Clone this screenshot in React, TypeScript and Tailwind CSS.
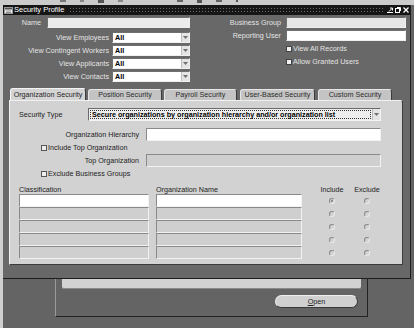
import React from "react";

const field =
  "h-[11px] border border-t-[#6f6f6f] border-l-[#6f6f6f] border-b-[#efefef] border-r-[#efefef]";
const cell =
  "h-[13px] border border-t-[#8a8a8a] border-l-[#8a8a8a] border-b-[#f2f2f2] border-r-[#f2f2f2]";

const DropArrow: React.FC = () => (
  <span className="flex h-full w-[8px] items-center justify-center border-l border-[#bdbdbd] bg-[#e4e4e4]">
    <svg width="5" height="3" viewBox="0 0 5 3">
      <path d="M0 0h5L2.5 3z" fill="#707070" />
    </svg>
  </span>
);

const ViewSelect: React.FC<{ label: string }> = ({ label }) => (
  <div className="flex h-[11px] items-center">
    <span className="w-[106px] text-right text-[#e4e4e4]">{label}</span>
    <div className={`${field} ml-[3px] flex w-[78px] items-center bg-white`}>
      <span className="flex-1 pl-[2px] font-bold text-black">All</span>
      <DropArrow />
    </div>
  </div>
);

const Check: React.FC<{ label: string; dark?: boolean }> = ({ label, dark }) => (
  <div className="flex h-[8px] items-center">
    <span
      className={`h-[6px] w-[6px] border ${
        dark ? "border-[#555] bg-[#eee]" : "border-[#444] bg-[#f0f0f0]"
      }`}
    />
    <span className={`ml-[1px] ${dark ? "text-[#222]" : "text-[#e4e4e4]"}`}>{label}</span>
  </div>
);

const Radio: React.FC<{ on?: boolean }> = ({ on }) => (
  <span className="flex h-[6px] w-[6px] items-center justify-center rounded-full border border-[#8a8a8a] border-r-[#e8e8e8] border-b-[#e8e8e8]">
    {on && <span className="h-[2px] w-[2px] rounded-full bg-[#777]" />}
  </span>
);

const tabs = [
  { name: "Position Security", w: "w-[74px]", ml: "ml-[2px]" },
  { name: "Payroll Security", w: "w-[73px]", ml: "ml-[2px]" },
  { name: "User-Based Security", w: "w-[75px]", ml: "ml-[3px]" },
  { name: "Custom Security", w: "w-[74px]", ml: "ml-[3px]" },
];

export default function App() {
  return (
    <div className="flex h-[328px] w-[414px] flex-col overflow-hidden bg-[#646464] font-['Liberation_Sans',Arial,sans-serif] text-[7.2px] leading-none">
      {/* toolbar strip */}
      <div className="flex h-[5px] items-start gap-[14px] bg-[#cbcbcb] pl-[60px]">
        <span className="h-[2px] w-[6px] bg-[#777]" />
        <span className="h-[2px] w-[4px] bg-[#888]" />
        <span className="h-[3px] w-[6px] bg-[#555]" />
        <span className="h-[2px] w-[5px] bg-[#888]" />
        <span className="ml-[40px] h-[2px] w-[6px] bg-[#666]" />
        <span className="h-[3px] w-[5px] bg-[#555]" />
        <span className="h-[2px] w-[6px] bg-[#666]" />
        <span className="h-[2px] w-[2px] bg-[#555]" />
      </div>

      <div className="flex flex-1">
        <div className="w-[3px] bg-[#cfcfcf]" />
        <div className="flex w-[408px] flex-col">
          {/* main window */}
          <div className="flex h-[274px] flex-col border-b border-r border-[#1e1e1e] bg-[#686868]">
            {/* title bar */}
            <div className="flex h-[10px] items-center bg-[#161616]">
              <svg width="9" height="7" viewBox="0 0 9 7" className="ml-[1px]">
                <rect x="0.5" y="0.5" width="8" height="6" fill="#eee" stroke="#999" />
                <rect x="1" y="1" width="7" height="1.5" fill="#555" />
                <path d="M2 4h5M2 5.5h5" stroke="#777" strokeWidth="0.8" />
              </svg>
              <span className="ml-[1px] text-[7.5px] text-white">Security Profile</span>
              <div className="ml-[5px] h-[6px] flex-1 bg-[radial-gradient(#6a6a6a_0.8px,transparent_0.9px)] bg-[length:3px_3px]" />
              <div className="ml-[2px] mr-[1px] flex items-center gap-[2px]">
                <svg width="6" height="6" viewBox="0 0 6 6">
                  <path d="M0 5.5h6M2 4.5l3.5-3.5M3 1h2.5v2.5" stroke="#fff" strokeWidth="1" fill="none" />
                </svg>
                <svg width="6" height="6" viewBox="0 0 6 6">
                  <rect x="0.5" y="1.5" width="4" height="4" stroke="#fff" fill="none" />
                  <path d="M2 0.5h3.5v3.5" stroke="#fff" fill="none" />
                </svg>
                <svg width="6" height="6" viewBox="0 0 6 6">
                  <path d="M0.5 0.5l5 5M5.5 0.5l-5 5" stroke="#fff" strokeWidth="1.3" />
                </svg>
              </div>
            </div>

            {/* header fields */}
            <div className="flex h-[73px] pt-[2px]">
              <div className="flex w-[197px] flex-col">
                <div className="flex h-[11px] items-center">
                  <span className="w-[38px] text-right text-[#e4e4e4]">Name</span>
                  <div className={`${field} ml-[6px] w-[143px] bg-[#ececec]`} />
                </div>
                <div className="mt-[4px] flex flex-col gap-[2px]">
                  <ViewSelect label="View Employees" />
                  <ViewSelect label="View Contingent Workers" />
                  <ViewSelect label="View Applicants" />
                  <ViewSelect label="View Contacts" />
                </div>
              </div>
              <div className="flex flex-col">
                <div className="flex h-[11px] items-center">
                  <span className="w-[81px] text-right text-[#e4e4e4]">Business Group</span>
                  <div className={`${field} ml-[5px] w-[120px] bg-[#e6e6e6]`} />
                </div>
                <div className="mt-[2px] flex h-[11px] items-center">
                  <span className="w-[81px] text-right text-[#e4e4e4]">Reporting User</span>
                  <div className={`${field} ml-[5px] w-[120px] bg-white`} />
                </div>
                <div className="ml-[86px] mt-[4px] flex flex-col gap-[5px]">
                  <Check label="View All Records" />
                  <Check label="Allow Granted Users" />
                </div>
              </div>
            </div>

            {/* tabs */}
            <div className="ml-[7px] flex h-[12px] items-end">
              <div className="flex h-[12px] w-[76px] items-center justify-center rounded-t-[3px] border border-b-0 border-t-[#f4f4f4] border-l-[#f4f4f4] border-r-[#3a3a3a] bg-[#d4d4d4] text-[#1e1e1e]">
                Organization Security
              </div>
              {tabs.map((t) => (
                <div
                  key={t.name}
                  className={`${t.w} ${t.ml} flex h-[11px] items-center justify-center rounded-t-[3px] border border-b-0 border-t-[#e6e6e6] border-l-[#e6e6e6] border-r-[#3a3a3a] bg-[#c4c4c4] text-[#2a2a2a]`}
                >
                  {t.name}
                </div>
              ))}
            </div>

            {/* tab panel */}
            <div className="ml-[6px] flex h-[165px] w-[394px] flex-col rounded-tr-[3px] border border-t-[#f0f0f0] border-l-[#f0f0f0] border-b-[#3c3c3c] border-r-[#3c3c3c] bg-[#d2d2d2] pl-[9px] pt-[7px] text-[#222]">
              <div className="flex h-[13px] items-center">
                <span className="w-[69px]">Security Type</span>
                <div className="flex h-[13px] w-[293px] items-center border border-[#6a6a6a] border-b-[#f4f4f4] border-r-[#f4f4f4] bg-[#eeeeee]">
                  <span className="mx-[1px] flex h-[9px] flex-1 items-center border border-dotted border-[#333] pl-[1px] font-bold text-black">
                    Secure organizations by organization hierarchy and/or organization list
                  </span>
                  <DropArrow />
                </div>
              </div>

              <div className="mt-[7px] flex h-[13px] items-center">
                <span className="w-[120px] text-right">Organization Hierarchy</span>
                <div className={`${cell} ml-[7px] w-[235px] bg-white`} />
              </div>

              <div className="ml-[22px] mt-[3px]">
                <Check label="Include Top Organization" dark />
              </div>

              <div className="mt-[2px] flex h-[13px] items-center">
                <span className="w-[120px] text-right">Top Organization</span>
                <div className={`${cell} ml-[7px] w-[235px] bg-[#cfcfcf]`} />
              </div>

              <div className="ml-[22px] mt-[3px]">
                <Check label="Exclude Business Groups" dark />
              </div>

              <div className="mt-[8px] flex h-[8px] items-center">
                <span className="w-[137px]">Classification</span>
                <span className="w-[158px]">Organization Name</span>
                <span className="w-[36px] text-center">Include</span>
                <span className="w-[34px] text-center">Exclude</span>
              </div>

              <div className="flex flex-col">
                {[0, 1, 2, 3, 4].map((i) => (
                  <div key={i} className="flex h-[13px] items-center">
                    <div className={`${cell} w-[130px] ${i === 0 ? "bg-white" : "bg-[#cfcfcf]"}`} />
                    <div className={`${cell} ml-[7px] w-[146px] ${i === 0 ? "bg-white" : "bg-[#cfcfcf]"}`} />
                    <div className="ml-[12px] flex w-[36px] justify-center">
                      <Radio on={i === 0} />
                    </div>
                    <div className="flex w-[34px] justify-center">
                      <Radio />
                    </div>
                  </div>
                ))}
              </div>
            </div>
          </div>

          {/* window behind */}
          <div className="ml-[52px] flex h-[38px] w-[313px] flex-col border-b border-l border-r border-b-[#222] border-l-[#9a9a9a] border-r-[#222] bg-[#646464]">
            <div className="mx-[6px] h-[10px] rounded-b-[2px] border-b border-[#8a8a8a] bg-[#d2d2d2]" />
            <div className="mr-[9px] mt-[6px] flex justify-end">
              <div className="flex h-[13px] w-[83px] items-center justify-center rounded-full border border-[#3a3a3a] border-t-[#eeeeee] border-l-[#eeeeee] bg-[#d0d0d0] text-[#222]">
                <span className="underline">O</span>pen
              </div>
            </div>
          </div>
        </div>
      </div>
    </div>
  );
}
